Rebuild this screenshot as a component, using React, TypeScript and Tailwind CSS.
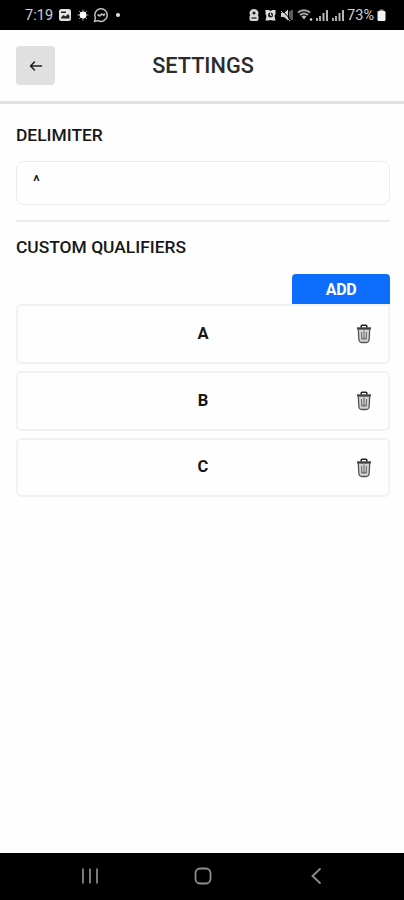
import React from "react";

const qualifiers = ["A", "B", "C"];

function StatusBar() {
  return (
    <div className="flex h-[30px] shrink-0 items-center bg-black pl-[25px] pr-[18px] text-[#d0d0d0]">
      <span className="w-[29px] whitespace-nowrap pt-[1px] text-[14.5px] leading-[31px] tracking-[0.1px]">7:19</span>
      <svg className="ml-[4px]" width="14" height="14" viewBox="0 0 14 14">
        <rect x="1" y="1" width="12" height="12" rx="2.5" fill="#e4e4e4" />
        <path d="M3 9.5 5.5 7l2 1.5L10 6l1.5 2v2.5H3z" fill="#222" />
        <path d="M3 3.5h5v1.5H3z" fill="#222" />
      </svg>
      <svg className="ml-[4px]" width="14" height="14" viewBox="0 0 14 14">
        <path d="M7 1.5v11M1.5 7h11M3 3l8 8M11 3l-8 8" stroke="#999" strokeWidth="1" />
        <circle cx="7" cy="7" r="3.4" fill="#fff" />
      </svg>
      <svg className="ml-[3px]" width="16" height="16" viewBox="0 0 16 16" fill="none" stroke="#bdbdbd" strokeWidth="1.5">
        <path d="M1.6 14.4l.8-3.5A6.3 6.3 0 1 1 5 13.6z" />
        <path d="M4.5 7.5 6.8 9l2-2 2 1.2 1-1.5" strokeWidth="1.7" />
      </svg>
      <span className="ml-[7px] size-[4px] rounded-full bg-[#e4e4e4]" />
      <span className="flex-1" />
      <svg width="12" height="14" viewBox="0 0 12 14">
        <path d="M1.500 5.500V5a4.500 4 0 0 1 9 0v.5q-.2 1-.8 1.500.8.500.8 1.500V11a2 2 0 0 1-2 2h-5a2 2 0 0 1-2-2V8.500q0-1 .8-1.500-.6-.5-.8-1.500z" fill="#d8d8d8" />
        <circle cx="6" cy="5" r="1.600" fill="#222" />
        <path d="M3.500 10h5" stroke="#222" strokeWidth="1.300" />
      </svg>
      <svg className="ml-[4px]" width="13" height="14" viewBox="0 0 13 14">
        <path d="M1.500 2h3l2 1 2-1h3v4l-1 2 1 4.500h-3L6.500 12l-2 .5h-3l1-4.500-1-2z" fill="#dedede" />
        <circle cx="6.500" cy="7" r="2.500" fill="#222" />
        <path d="M6.500 5v2.300H8" stroke="#ddd" strokeWidth="1" fill="none" />
      </svg>
      <svg className="ml-[3px]" width="13" height="14" viewBox="0 0 13 14">
        <path d="M1 5h3l4-3.500v11L4 9H1z" fill="#d5d5d5" />
        <path d="M10 3v8M12 2v10" stroke="#999" strokeWidth="1.200" />
        <path d="m2 2 9 10" stroke="#000" strokeWidth="1" />
        <path d="m1 3 9 10" stroke="#ccc" strokeWidth="1" />
      </svg>
      <svg className="mr-[1px] ml-[4px]" width="17" height="14" viewBox="0 0 17 14">
        <path d="M1 4.500a9 9 0 0 1 12 0M3 7a6 6 0 0 1 8 0" stroke="#aaa" strokeWidth="1.900" fill="none" />
        <path d="M4.500 8.500a4 4 0 0 1 5 0L7 11.500z" fill="#bbb" />
        <circle cx="14" cy="11.500" r="1.300" fill="#ddd" />
      </svg>
      {[0, 1].map((item) => (
        <svg key={item} className="mr-[2px]" width="14" height="14" viewBox="0 0 14 14">
          <path d="M2 10v3M5 8v5" stroke="#aaa" strokeWidth="2" />
          <path d="M8.500 5v8M12 2v11" stroke="#b5b5b5" strokeWidth="2" />
        </svg>
      ))}
      <span className="w-[30px] whitespace-nowrap pt-[1px] text-[14.5px] leading-[31px] tracking-[0.1px]">73%</span>
      <svg width="9" height="14" viewBox="0 0 9 14">
        <path d="M2.500 1.500h4v2h-4z" fill="#999" />
        <rect x=".5" y="3" width="8" height="10" rx="1.300" fill="#f3f3f3" />
      </svg>
    </div>
  );
}

function TrashIcon() {
  return (
    <svg width="16" height="20" viewBox="0 0 16 20" fill="none">
      <path d="M5.200 3.500V2.300q0-1 1-1h3.600q1 0 1 1v1.200" stroke="#222" strokeWidth="1.600" />
      <path d="M1 4.300h14" stroke="#303030" strokeWidth="1.900" />
      <path d="M2.300 5.200 2.800 15q.3 3.500 2.900 3.500h4.600q2.600 0 2.900-3.500l.5-9.800z" fill="#d4d4d4" stroke="#555" strokeWidth="1.300" />
      <path d="m5.500 8 .3 7.500M8 6.500v9.500M10.500 8l-.3 7.500" stroke="#777" strokeWidth="1.200" />
      <path d="M5.500 14.500h5" stroke="#777" strokeWidth="1.300" />
    </svg>
  );
}

export default function App() {
  return (
    <div className="flex h-[900px] w-[404px] flex-col overflow-hidden bg-[#fefefe] font-['Roboto',sans-serif] text-[#171717]">
      <StatusBar />
      <header className="grid h-[74px] shrink-0 grid-cols-[40px_1fr_40px] items-center border-b-[3px] border-[#e1e1e1] px-4">
        <button aria-label="Back" className="flex size-[39px] items-center justify-center rounded-[4px] bg-[#e0e0e0]">
          <svg width="14" height="12" viewBox="0 0 14 12" fill="none" stroke="#202020" strokeWidth="1.600" strokeLinecap="round" strokeLinejoin="round">
            <path d="M12.500 6H1.800M5.500 2 1.500 6l4 4" />
          </svg>
        </button>
        <h1 className="pl-[2px] text-center text-[21.7px] leading-6 font-medium text-[#2c2c2c]">SETTINGS</h1>
      </header>

      <main className="flex flex-1 flex-col pr-[14px] pl-4">
        <h2 className="mt-[21px] h-5 text-[17.4px] leading-[21px] font-medium">DELIMITER</h2>
        <div className="mt-4 h-11 rounded-[8px] border-[1.500px] border-[#ececec] pl-4 text-[16px] leading-[40px] font-medium">^</div>
        <hr className="mt-[15px] border-t-2 border-[#ececec]" />
        <h2 className="mt-[15px] h-5 text-[17.4px] leading-5 font-medium">CUSTOM QUALIFIERS</h2>
        <button className="mt-[17px] h-[30px] w-[98px] self-end rounded-t-[4px] bg-[#0d6efd] pb-[1px] text-[16px] leading-[31px] font-bold tracking-[-0.4px] text-white">ADD</button>
        <ul className="flex flex-col gap-[7px]">
          {qualifiers.map((name, index) => (
            <li
              key={name}
              className={`grid grid-cols-[40px_1fr_40px] items-center border-2 border-[#f2f2f2] pr-[4px] pl-[4px] text-center text-[16.5px] font-bold ${index === 0 ? "h-[60px] rounded-[5px] rounded-tr-none" : index === 1 ? "h-[60px] rounded-[5px]" : "h-[59px] rounded-[5px]"}`}
            >
              <span className="col-start-2">{name}</span>
              <button aria-label={`Delete ${name}`} className="flex justify-center"><TrashIcon /></button>
            </li>
          ))}
        </ul>
      </main>

      <nav className="flex h-[47px] shrink-0 items-center justify-between bg-black pr-[80px] pb-[1px] pl-[81px] text-[#8e8e8e]">
        <svg width="18" height="18" viewBox="0 0 18 18" stroke="currentColor" strokeWidth="1.700">
          <path d="M2 1.500v15M9 1.500v15M16 1.500v15" />
        </svg>
        <svg className="mr-[4px]" width="18" height="18" viewBox="0 0 18 18" fill="none" stroke="currentColor" strokeWidth="1.800">
          <rect x="1.500" y="1.500" width="15" height="15" rx="4.500" />
        </svg>
        <svg width="14" height="18" viewBox="0 0 14 18" fill="none" stroke="currentColor" strokeWidth="1.800">
          <path d="M10.500 1.500 2.500 9l8 7.500" />
        </svg>
      </nav>
    </div>
  );
}
